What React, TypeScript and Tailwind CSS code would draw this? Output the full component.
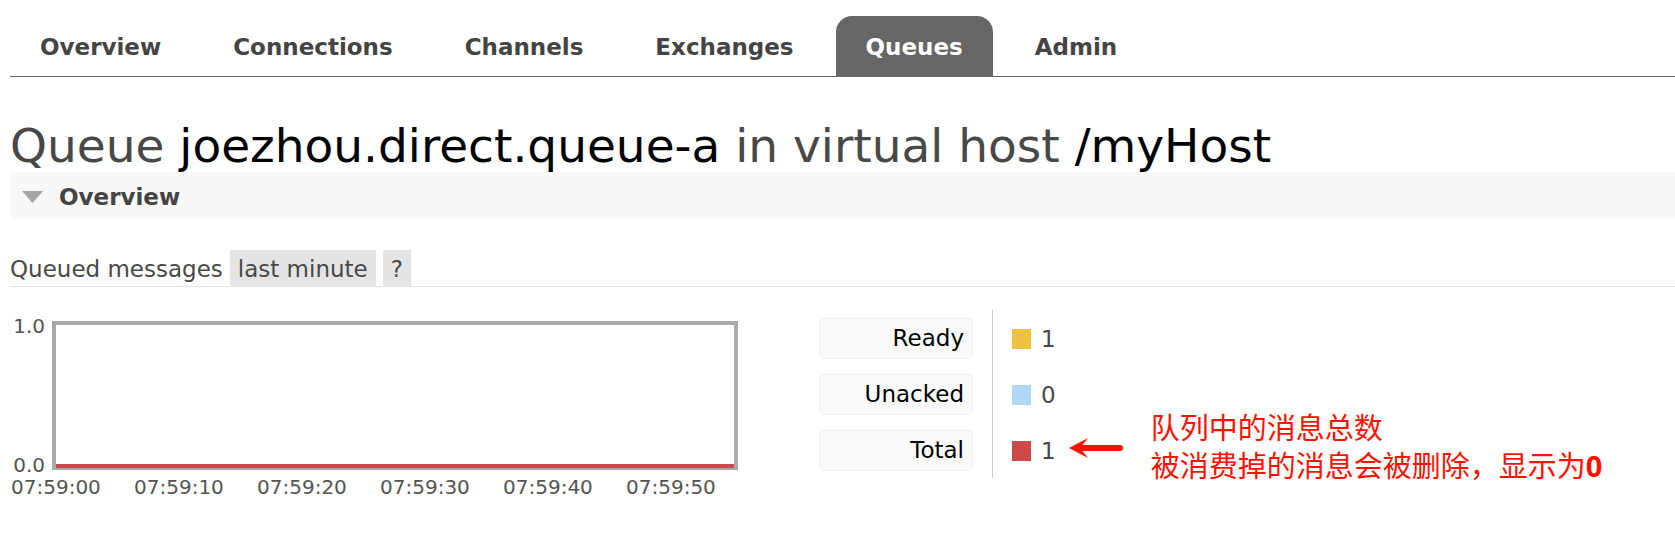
type Series = { label: string; value: number; swatch: string };

const TABS = ["Overview", "Connections", "Channels", "Exchanges", "Queues", "Admin"];
const ACTIVE_TAB = "Queues";
const TIMES = ["07:59:00", "07:59:10", "07:59:20", "07:59:30", "07:59:40", "07:59:50"];
const SERIES: Series[] = [
  { label: "Ready", value: 1, swatch: "bg-[#edc240]" },
  { label: "Unacked", value: 0, swatch: "bg-[#afd8f8]" },
  { label: "Total", value: 1, swatch: "bg-[#cb4b4b]" },
];

function Tabs() {
  return (
    <nav className="border-b border-[#666]">
      <ul className="flex gap-3">
        {TABS.map((tab) => (
          <li key={tab}>
            <a
              href={"#" + tab.toLowerCase()}
              className={
                tab === ACTIVE_TAB
                  ? "block rounded-t-2xl bg-[#666] px-[30px] pt-[17px] pb-[15px] font-bold leading-7 text-white"
                  : "block px-[30px] pt-[17px] pb-[15px] font-bold leading-7 text-[#444]"
              }
            >
              {tab}
            </a>
          </li>
        ))}
      </ul>
    </nav>
  );
}

function Chart() {
  return (
    <figure className="w-[728px] shrink-0 pt-[6px] text-[20px] leading-5 text-[#545454]">
      <div className="flex gap-[7px]">
        <div className="flex flex-col justify-between w-[35px] text-right">
          <span>1.0</span>
          <span>0.0</span>
        </div>
        <div className="my-[5px] flex h-[149px] flex-1 flex-col justify-end border-4 border-b-2 border-[#a9a9a9] bg-white">
          <div className="h-1 bg-[#cb4b4b]" />
        </div>
      </div>
      <div className="mt-[2px] flex gap-[23px] pl-px">
        {TIMES.map((time) => (
          <span key={time} className="w-[100px] shrink-0 whitespace-nowrap">
            {time}
          </span>
        ))}
      </div>
    </figure>
  );
}

function Legend() {
  return (
    <table className="shrink-0 border-collapse">
      <tbody>
        {SERIES.map(({ label, value, swatch }) => (
          <tr key={label} className="h-14">
            <th scope="row" className="border-r border-[#ccc] py-0 pr-[19px] font-normal">
              <button
                type="button"
                className="block h-[41px] w-[154px] rounded-[5px] border border-[#f0f0f0] bg-[#fafafa] px-2 text-right text-black"
              >
                {label}
              </button>
            </th>
            <td className="pt-[2px] pb-0 pl-[19px]">
              <div className="flex items-center gap-[10px]">
                <span className={"h-5 w-[19px] " + swatch} />
                {value}
              </div>
            </td>
          </tr>
        ))}
      </tbody>
    </table>
  );
}

function Note() {
  return (
    <div className="ml-[13px] flex shrink-0 gap-7 pt-[99px] text-[#ff1100]">
      <svg width="54" height="20" viewBox="0 0 54 20" className="mt-[29px]" aria-hidden="true">
        <path d="M0 10 L19 0 L13.500 7 H51 Q54 7 54 10 Q54 13 51 13 H13.500 L19 20 Z" fill="currentColor" />
      </svg>
      <p className="whitespace-nowrap font-['Noto_Sans','Noto_Sans_CJK_SC',sans-serif] text-[29px] leading-[38px]">
        队列中的消息总数
        <br />
        被消费掉的消息会被删除，显示为<b>0</b>
      </p>
    </div>
  );
}

export default function App() {
  return (
    <main className="overflow-hidden bg-white pl-[10px] pt-4 pb-9 font-['DejaVu_Sans',Verdana,sans-serif] text-[23px] leading-7 text-[#484848]">
      <Tabs />
      <h1 className="mt-[42px] whitespace-nowrap text-[47px] leading-[53px]">
        Queue <span className="text-black">joezhou.direct.queue-a</span> in virtual host{" "}
        <span className="text-black">/myHost</span>
      </h1>
      <section>
        <h2 className="flex items-center gap-4 bg-[#f8f8f8] px-3 pt-[3px] font-bold leading-[44px] text-[#444]">
          <svg width="21" height="12" viewBox="0 0 21 12" aria-hidden="true">
            <path d="M0 0H21L10.500 12Z" fill="#a6a6a6" />
          </svg>
          Overview
        </h2>
        <h3 className="mt-[31px] flex gap-[7px] border-b border-[#e4e4e4] leading-[34px]">
          <span className="pt-[2px]">Queued messages</span>
          <button type="button" className="bg-[#e4e4e4] px-2 pt-[2px]">
            last minute
          </button>
          <button type="button" className="bg-[#e4e4e4] px-2 pt-[2px]">
            ?
          </button>
        </h3>
        <div className="mt-[23px] flex items-start">
          <Chart />
          <div className="ml-[81px] flex items-start">
            <Legend />
            <Note />
          </div>
        </div>
      </section>
    </main>
  );
}
